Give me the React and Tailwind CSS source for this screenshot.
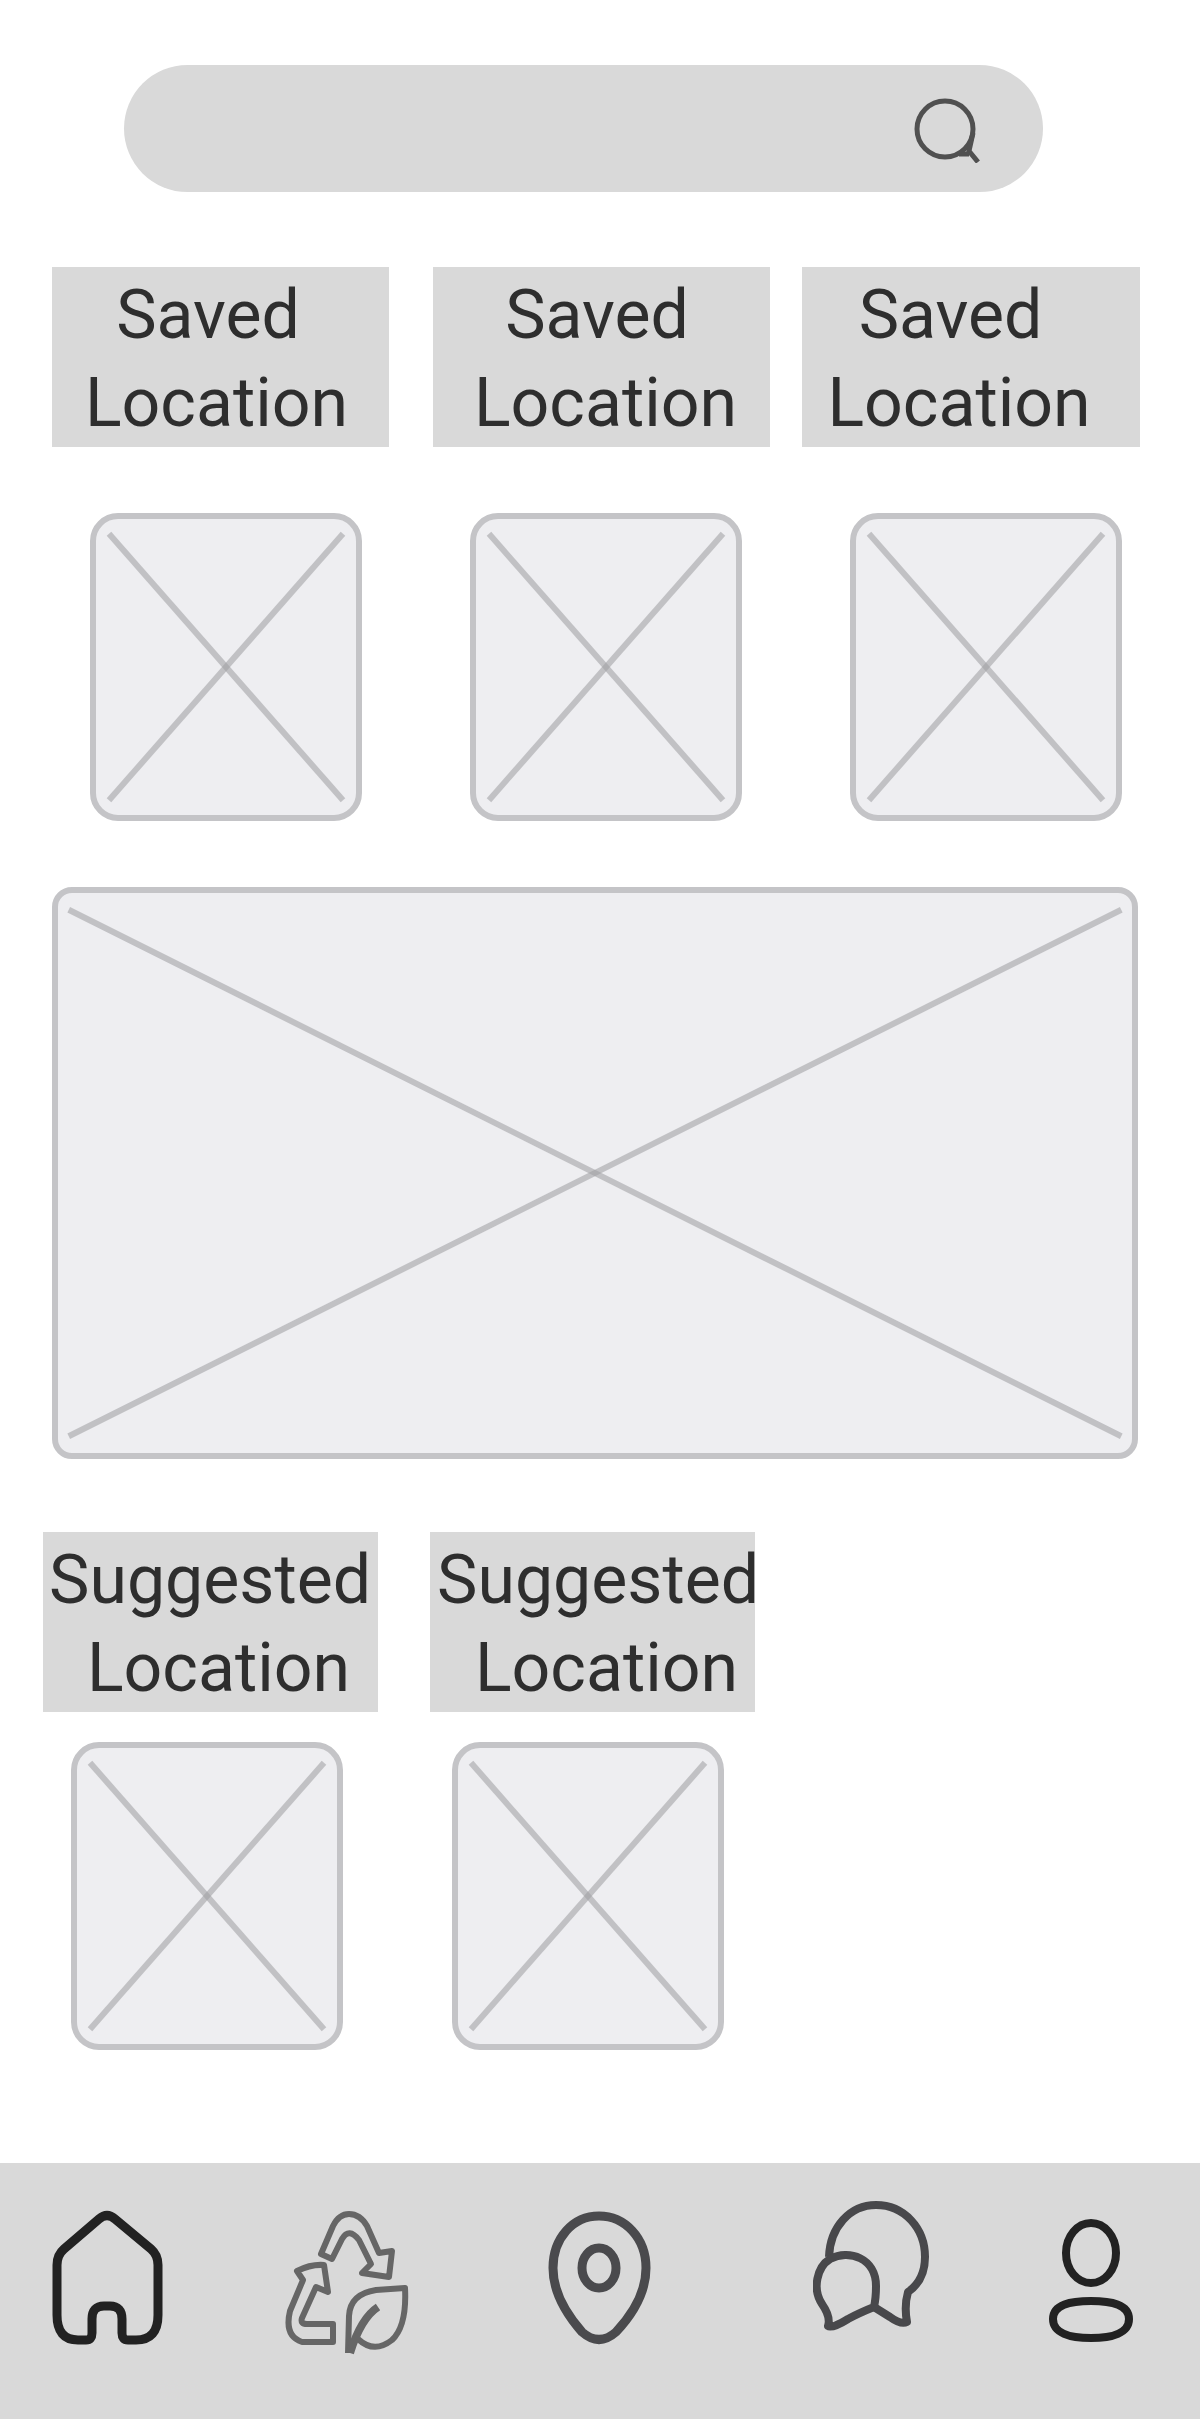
import React from "react";

function Placeholder({ className, insetX, insetY }) {
  return (
    <div className={`overflow-hidden border-[6px] border-[#c4c4c7] bg-[#eeeef1] ${className}`}>
      <svg className="block h-full w-full" aria-hidden="true">
        <g stroke="#a0a0a3" strokeOpacity="0.58" strokeWidth="6">
          <line x1={`${insetX}%`} y1={`${insetY}%`} x2={`${100 - insetX}%`} y2={`${100 - insetY}%`} />
          <line x1={`${100 - insetX}%`} y1={`${insetY}%`} x2={`${insetX}%`} y2={`${100 - insetY}%`} />
        </g>
      </svg>
    </div>
  );
}

function Thumb() {
  return <Placeholder className="h-[308px] w-[272px] rounded-[28px]" insetX={5} insetY={5} />;
}

function Label({ first, className }) {
  return (
    <h2
      className={`flex h-[180px] flex-col items-center bg-[#d9d9d9] pt-1 text-[68px] leading-[88px] font-normal whitespace-pre text-[#2e2e2e] ${className}`}
    >
      <span>{first + " "}</span>
      <span>Location</span>
    </h2>
  );
}

const navItems = [
  {
    name: "Home",
    width: "w-[114px]",
    box: "0 0 114 165",
    color: "#222222",
    stroke: 9,
    art: (
      <path d="M49 24Q57 17 65 24L101 54Q108 60 108 70V120Q108 145 86 145H78Q72 145 72 138V124Q72 111 60 111H54Q42 111 42 124V138Q42 145 36 145H28Q7 145 7 120V70Q7 60 14 54Z" />
    ),
  },
  {
    name: "Recycling",
    width: "w-[124px]",
    box: "0 0 124 165",
    color: "#666666",
    stroke: 6,
    art: (
      <>
        <path d="M36 59L48 31Q54 19 64 19Q75 19 82 31L94 58L107 56L104 82L77 78L86 69L74 45Q64 32 57 44L47 64Z" />
        <path d="M12 76Q26 69 39 70L43 97L31 92L17 123Q15 129 22 129H48V147H17Q-1 141 5 116L18 85Z" />
        <path d="M63 158L64 121Q65 99 91 95L120 93Q122 131 107 145Q89 159 73 144" />
        <path d="M93 112Q76 123 65 158" strokeWidth="8" />
      </>
    ),
  },
  {
    name: "Map",
    width: "w-[104px]",
    box: "0 0 104 165",
    color: "#4a4a4d",
    stroke: 9,
    art: (
      <>
        <path d="M51 21C77 21 98 43 98 73C98 98 83 121 68 137Q51 152 34 137C20 121 5 98 5 73C5 43 25 21 51 21Z" />
        <ellipse cx="51" cy="73" rx="17" ry="20" />
      </>
    ),
  },
  {
    name: "Messages",
    width: "w-[118px]",
    box: "0 0 118 165",
    color: "#48484b",
    stroke: 8,
    art: (
      <>
        <path d="M16 62C17 32 37 10 63 10C91 10 112 33 112 62C112 78 105 90 95 97Q91 111 94 127Q88 130 77 122L61 112" />
        <path d="M9 109C-1 94 4 72 17 64C36 54 63 63 63 91Q63 103 61 112Q46 118 35 124Q19 134 15 131Q18 122 9 109Z" />
      </>
    ),
  },
  {
    name: "Profile",
    width: "w-[86px]",
    box: "0 0 86 165",
    color: "#222222",
    stroke: 8,
    art: (
      <>
        <ellipse cx="43" cy="58" rx="25" ry="30" />
        <path d="M43 106C63 106 81 109 81 124C81 138 64 143 43 143C22 143 5 138 5 124C5 109 23 106 43 106Z" />
      </>
    ),
  },
];

export default function App() {
  return (
    <div className="flex min-h-screen flex-col bg-white font-[Roboto,sans-serif]">
      <main className="flex-1">
        <form
          role="search"
          onSubmit={(e) => e.preventDefault()}
          className="mt-[65px] mr-[157px] ml-[124px] flex h-[127px] items-center rounded-full bg-[#d9d9d9] pr-[62px] pl-12"
        >
          <input
            type="search"
            aria-label="Search"
            className="h-full min-w-0 flex-1 bg-transparent text-[48px] text-[#2e2e2e] outline-none"
          />
          <button type="submit" aria-label="Search">
            <svg className="block h-[68px] w-[68px]" viewBox="0 0 68 68" fill="none" stroke="#505050" strokeWidth="5">
              <ellipse cx="32" cy="34" rx="28" ry="28" />
              <path d="M60 38L56 56L65 67M46 59H56" />
            </svg>
          </button>
        </form>

        <section aria-label="Saved locations">
          <div className="mt-[75px] mr-[60px] ml-[52px] grid grid-cols-[minmax(0,381fr)_minmax(0,369fr)_minmax(0,338fr)]">
            <Label first="Saved" className="mr-11 pr-2" />
            <Label first="Saved" className="mr-8 pl-2" />
            <Label first="Saved" className="pr-6" />
          </div>
          <div className="mt-[66px] grid grid-cols-3 justify-items-center pr-6 pl-9">
            <Thumb />
            <Thumb />
            <Thumb />
          </div>
        </section>

        <Placeholder
          className="mt-[66px] mr-[62px] ml-[52px] h-[572px] rounded-[20px]"
          insetX={1}
          insetY={3}
        />

        <section aria-label="Suggested locations">
          <div className="mt-[73px] mr-[60px] ml-[43px] grid grid-cols-[minmax(0,387fr)_minmax(0,371fr)_minmax(0,339fr)]">
            <Label first="Suggested" className="mr-[52px] pl-4" />
            <Label first="Suggested" className="mr-[46px] pl-7" />
          </div>
          <div className="mt-[30px] grid grid-cols-3 justify-items-center pr-10 pl-4">
            <Thumb />
            <Thumb />
          </div>
        </section>
      </main>

      <nav
        aria-label="Main"
        className="grid h-64 grid-cols-[214fr_266fr_240fr_304fr_134fr_42fr] items-start justify-items-center bg-[#d9d9d9] pt-8"
      >
        {navItems.map((item) => (
          <a key={item.name} href="#" aria-label={item.name}>
            <svg
              className={`block h-[165px] ${item.width}`}
              viewBox={item.box}
              fill="none"
              stroke={item.color}
              strokeWidth={item.stroke}
              strokeLinejoin="round"
            >
              {item.art}
            </svg>
          </a>
        ))}
      </nav>
    </div>
  );
}
